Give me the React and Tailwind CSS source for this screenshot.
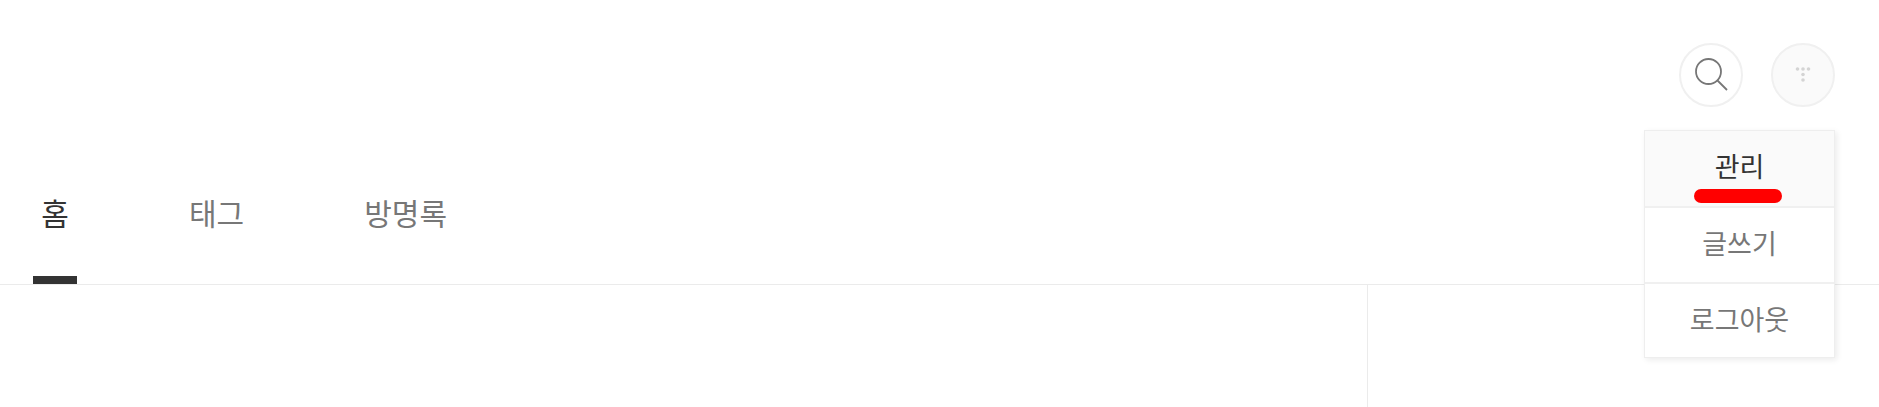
export default function App() {
  const font = { fontFamily: '"Noto Sans CJK KR", "Noto Sans", sans-serif' };
  return (
    <div className="relative h-[407px] w-[1879px] overflow-hidden bg-white" style={font}>
      <header className="flex h-[285px] flex-col justify-between border-b border-[#ebebeb]">
        <div className="flex justify-end gap-[28px] pr-[44px] pt-[43px]">
          <button className="flex h-[64px] w-[64px] items-center justify-center rounded-full border-2 border-[#f0f0f0] bg-white">
            <svg className="ml-[2px]" width="36" height="36" viewBox="0 0 36 36" fill="none" stroke="#777" strokeWidth="1.8">
              <circle cx="14.5" cy="14.5" r="12.5" />
              <path d="M23.5 23.5 L33 33" />
            </svg>
          </button>
          <button className="flex h-[64px] w-[64px] items-center justify-center rounded-full border-2 border-[#f0f0f0] bg-[#fafafa]">
            <svg width="16" height="18" viewBox="0 0 16 18" fill="#d4d4d4">
              <circle cx="2.5" cy="3" r="1.8" />
              <circle cx="8" cy="3" r="1.8" />
              <circle cx="13.5" cy="3" r="1.8" />
              <circle cx="8" cy="8.5" r="1.8" />
              <circle cx="8" cy="14" r="1.8" />
            </svg>
          </button>
        </div>
        <nav className="flex gap-[120px] pl-[41px] text-[30px] leading-[40px] text-[#777]">
          <a className="relative block h-[92px] w-[28px] whitespace-nowrap text-[#333]">
            <span className="flex justify-center">홈</span>
            <span className="absolute bottom-0 left-[-8px] h-[8px] w-[44px] bg-[#333]" />
          </a>
          <a className="block h-[92px] whitespace-nowrap">태그</a>
          <a className="block h-[92px] whitespace-nowrap">방명록</a>
        </nav>
      </header>

      <div className="flex h-[122px]">
        <main className="h-full w-[1368px] border-r border-[#ebebeb]" />
      </div>

      <ul className="absolute left-[1644px] top-[130px] w-[191px] border border-[#eeeeee] bg-white text-center text-[27px] text-[#777] shadow-[2px_2px_6px_rgba(0,0,0,0.08)]">
        <li className="relative flex h-[75px] items-center justify-center bg-[#fafafa] pb-[4px] text-[#333]">
          관리
          <span className="absolute left-[49px] top-[58px] h-[14px] w-[88px] rounded-full bg-[#ff0000]" />
        </li>
        <li className="flex h-[76px] items-center justify-center border-t-2 border-[#f0f0f0] pb-[4px]">글쓰기</li>
        <li className="flex h-[75px] items-center justify-center border-t-2 border-[#f0f0f0] pb-[2px]">로그아웃</li>
      </ul>
    </div>
  );
}
